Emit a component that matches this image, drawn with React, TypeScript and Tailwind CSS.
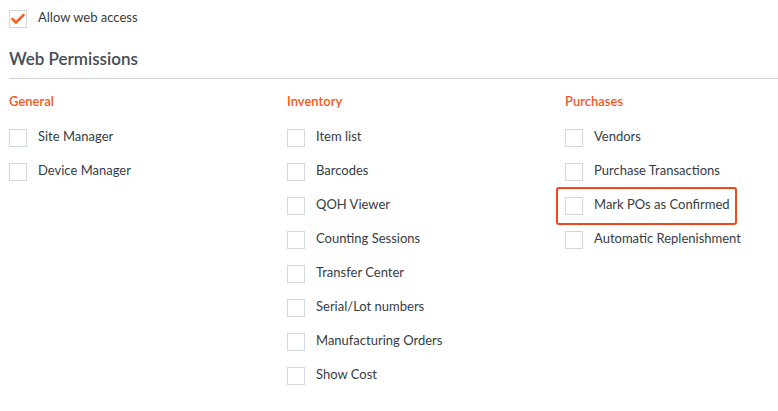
import React from 'react';

const columns = [
  { title: 'General', items: ['Site Manager', 'Device Manager'] },
  {
    title: 'Inventory',
    items: [
      'Item list',
      'Barcodes',
      'QOH Viewer',
      'Counting Sessions',
      'Transfer Center',
      'Serial/Lot numbers',
      'Manufacturing Orders',
      'Show Cost',
    ],
  },
  {
    title: 'Purchases',
    items: ['Vendors', 'Purchase Transactions', 'Mark POs as Confirmed', 'Automatic Replenishment'],
  },
];

function Box({ checked = false }: { checked?: boolean }) {
  return (
    <span className="w-[18px] h-[18px] shrink-0 border border-[#d3d8dd] bg-white flex items-center justify-center">
      {checked && (
        <svg width="14" height="12" viewBox="0 0 14 12">
          <path d="M1.5 6 L5 9.5 L12.5 2" fill="none" stroke="#f26522" strokeWidth="2.6" strokeLinecap="round" strokeLinejoin="round" />
        </svg>
      )}
    </span>
  );
}

function Row({ label, checked, marked }: { label: string; checked?: boolean; marked?: boolean }) {
  return (
    <div className="relative flex items-center h-[18px]">
      <Box checked={checked} />
      <span className="ml-[11px] -mt-[2px] text-[13px] text-[#363c43] whitespace-nowrap">{label}</span>
      {marked && (
        <span className="absolute left-[-9px] top-[-10px] w-[181px] h-[38px] border-2 border-[#f2471c] rounded-[3px] pointer-events-none" />
      )}
    </div>
  );
}

export default function App() {
  return (
    <div className="w-[778px] h-[411px] bg-white pl-[9px] pt-[10px] overflow-hidden font-['Lato','Liberation_Sans',sans-serif]">
      <Row label="Allow web access" checked />
      <h2 className="mt-[19px] text-[17px] leading-[24px] font-semibold text-[#444d57]">Web Permissions</h2>
      <div className="mt-[7px] border-b border-[#cdd2d8]" />
      <div className="flex mt-[13px]">
        {columns.map((col) => (
          <div key={col.title} className="w-[278px] shrink-0">
            <div className="text-[13px] leading-[18px] font-semibold text-[#f5561d]">{col.title}</div>
            <div className="mt-[19px] flex flex-col gap-[16px]">
              {col.items.map((item) => (
                <Row key={item} label={item} marked={item === 'Mark POs as Confirmed'} />
              ))}
            </div>
          </div>
        ))}
      </div>
    </div>
  );
}
